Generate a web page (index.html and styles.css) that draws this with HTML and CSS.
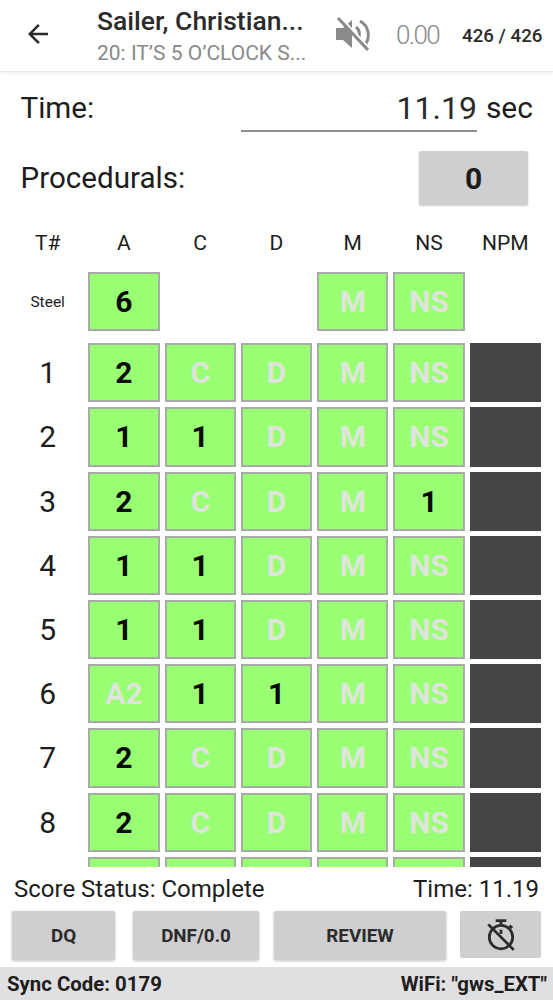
FILE: index.html
```html
<!DOCTYPE html>
<html lang="en">
<head>
<meta charset="utf-8">
<title>Score</title>
<link rel="stylesheet" href="styles.css">
</head>
<body>
<div class="app">
  <header class="appbar">
    <svg class="back" viewBox="0 0 24 24" width="30" height="30"><path d="M20 11H7.83l5.59-5.59L12 4l-8 8 8 8 1.41-1.41L7.83 13H20z"/></svg>
    <div class="titles">
      <div class="title">Sailer, Christian...</div>
      <div class="subtitle">20: IT’S 5 O’CLOCK S...</div>
    </div>
    <svg class="mute" viewBox="0 0 36 36" width="36" height="36">
      <path class="fill" d="M1 12h7l9-8v28l-9-8H1z"/>
      <path class="wave" d="M21 11a9 9 0 0 1 2 12M25 5a16 16 0 0 1 4 25"/>
      <path class="halo" d="M5 1l30 32"/>
      <path class="slash" d="M3 2l30 32"/>
    </svg>
    <div class="level">0.00</div>
    <div class="count">426 / 426</div>
  </header>

  <section class="form">
    <div class="time-row">
      <span class="label">Time:</span>
      <span class="time-field">11.19</span>
      <span class="unit">sec</span>
    </div>
    <div class="proc-row">
      <span class="label">Procedurals:</span>
      <span class="proc-btn">0</span>
    </div>
  </section>

  <div class="heads">
    <span>T#</span><span>A</span><span>C</span><span>D</span><span>M</span><span>NS</span><span>NPM</span>
  </div>

  <main class="scroll">
    <div class="grid steel-grid">
      <span class="rowlabel small">Steel</span>
      <span class="cell on">6</span><span></span><span></span>
      <span class="cell">M</span><span class="cell">NS</span><span></span>
    </div>
    <div class="grid">
      <span class="rowlabel">1</span><span class="cell on">2</span><span class="cell">C</span><span class="cell">D</span><span class="cell">M</span><span class="cell">NS</span><span class="npm"></span>
      <span class="rowlabel">2</span><span class="cell on">1</span><span class="cell on">1</span><span class="cell">D</span><span class="cell">M</span><span class="cell">NS</span><span class="npm"></span>
      <span class="rowlabel">3</span><span class="cell on">2</span><span class="cell">C</span><span class="cell">D</span><span class="cell">M</span><span class="cell on">1</span><span class="npm"></span>
      <span class="rowlabel">4</span><span class="cell on">1</span><span class="cell on">1</span><span class="cell">D</span><span class="cell">M</span><span class="cell">NS</span><span class="npm"></span>
      <span class="rowlabel">5</span><span class="cell on">1</span><span class="cell on">1</span><span class="cell">D</span><span class="cell">M</span><span class="cell">NS</span><span class="npm"></span>
      <span class="rowlabel">6</span><span class="cell">A2</span><span class="cell on">1</span><span class="cell on">1</span><span class="cell">M</span><span class="cell">NS</span><span class="npm"></span>
      <span class="rowlabel">7</span><span class="cell on">2</span><span class="cell">C</span><span class="cell">D</span><span class="cell">M</span><span class="cell">NS</span><span class="npm"></span>
      <span class="rowlabel">8</span><span class="cell on">2</span><span class="cell">C</span><span class="cell">D</span><span class="cell">M</span><span class="cell">NS</span><span class="npm"></span>
      <span class="rowlabel"></span><span class="cell"></span><span class="cell"></span><span class="cell"></span><span class="cell"></span><span class="cell"></span><span class="npm"></span>
    </div>
  </main>

  <div class="status">
    <span>Score Status: Complete</span>
    <span>Time: 11.19</span>
  </div>

  <div class="actions">
    <button class="btn dq">DQ</button>
    <button class="btn dnf">DNF/0.0</button>
    <button class="btn review">REVIEW</button>
    <button class="btn timer">
      <svg viewBox="0 0 32 32" width="34" height="34">
        <path class="ic" d="M11 2.5h10"/>
        <path class="ic" d="M16 3v4"/>
        <circle class="ic" cx="16" cy="18" r="11"/>
        <path class="ic" d="M24 7l2.5 2.5"/>
        <path class="ic" d="M4 6l24 24"/>
        <path class="ic" d="M16 11v4"/>
      </svg>
    </button>
  </div>

  <footer class="bar">
    <span>Sync Code: 0179</span>
    <span>WiFi: "gws_EXT"</span>
  </footer>
</div>
</body>
</html>
```
FILE: styles.css
```css
* { box-sizing: border-box; }
html, body { margin: 0; padding: 0; background: #fff; }
body { font-family: Roboto, "Liberation Sans", sans-serif; color: #1d1d1d; }
.app { width: 553px; height: 1000px; display: flex; flex-direction: column; overflow: hidden; }

.appbar { height: 72px; flex: none; display: flex; align-items: center; padding-left: 23px; border-bottom: 1px solid #e8e8e8; box-shadow: 0 1px 3px rgba(0,0,0,.08); position: relative; z-index: 1; }
.back { fill: #2a2a2a; flex: none; margin-bottom: 4px; }
.titles { width: 239px; margin-left: 44px; flex: none; }
.title { font-size: 26.5px; font-weight: 500; line-height: 30px; color: #2b2b2b; white-space: nowrap; }
.subtitle { font-size: 21px; line-height: 24px; color: #8a8a8a; white-space: nowrap; margin-top: 5px; }
.mute { flex: none; margin-left: -1px; margin-bottom: 4px; }
.wave, .slash { fill: none; stroke: #8a8a8a; stroke-width: 3; }
.halo { fill: none; stroke: #fff; stroke-width: 2.5; }
.fill { fill: #8a8a8a; }
.level { font-size: 26px; color: #8a8a8a; margin-left: 25px; margin-bottom: 2px; letter-spacing: -1.6px; font-weight: 300; }
.count { font-size: 18.7px; font-weight: 500; color: #2b2b2b; margin-left: 23px; white-space: nowrap; }

.form { flex: none; padding: 0 25px 0 20.5px; }
.label { font-size: 29.6px; line-height: 48px; color: #1d1d1d; }
.time-row { display: flex; align-items: flex-end; height: 60px; }
.time-field { margin-left: auto; width: 236px; height: 50px; padding-top: 6px; border-bottom: 2px solid #8f8f8f; text-align: right; font-size: 32px; line-height: 40px; color: #2b2b2b; }
.unit { font-size: 30px; line-height: 48px; margin-left: 9px; margin-right: -5px; }
.proc-row { display: flex; align-items: center; justify-content: space-between; height: 54px; margin-top: 19px; }
.proc-btn { width: 109px; height: 54px; background: #cfced0; border-radius: 2px; box-shadow: 0 1px 2px rgba(0,0,0,.2); display: flex; align-items: center; justify-content: center; font-size: 30px; font-weight: 700; }

.heads, .grid { display: grid; grid-template-columns: repeat(7, 1fr); column-gap: 5px; padding: 0 12px 0 12px; }
.heads { flex: none; margin-top: 16px; height: 44px; margin-bottom: 7px; align-items: center; text-align: center; font-size: 21px; }
.scroll { flex: 1; overflow: hidden; min-height: 0; }
.grid { grid-auto-rows: 59.2px; row-gap: 5px; }
.steel-grid { margin-bottom: 12px; }
.rowlabel { display: flex; align-items: center; justify-content: center; font-size: 30px; }
.rowlabel.small { font-size: 15.5px; }
.cell { background: #99ff73; border: 2px solid #a7ada6; display: flex; align-items: center; justify-content: center; font-size: 30px; font-weight: 700; color: #dfe4dc; }
.cell.on { color: #0a0a0a; }
.npm { background: #454346; }

.status { flex: none; height: 44px; display: flex; align-items: center; justify-content: space-between; padding: 0 14px; font-size: 24px; }
.actions { flex: none; height: 56px; display: flex; align-items: flex-start; padding-left: 12px; }
.btn { height: 49px; border: 0; padding: 0; border-radius: 2px; background: #cfced0; box-shadow: 0 1px 3px rgba(0,0,0,.25); font-family: inherit; font-size: 18.8px; font-weight: 700; color: #2b2b2b; display: flex; align-items: center; justify-content: center; }
.dq { width: 103px; }
.dnf { width: 126px; margin-left: 18px; }
.review { width: 172px; margin-left: 15px; }
.timer { width: 81px; margin-left: 14px; height: 47px; box-shadow: none; }
.ic { fill: none; stroke: #2b2b2b; stroke-width: 2.6; }

.bar { flex: none; height: 33px; background: #e0dfe1; display: flex; align-items: center; justify-content: space-between; padding: 0 6px 0 7px; font-size: 20.4px; font-weight: 700; color: #1d1d1d; }
```
